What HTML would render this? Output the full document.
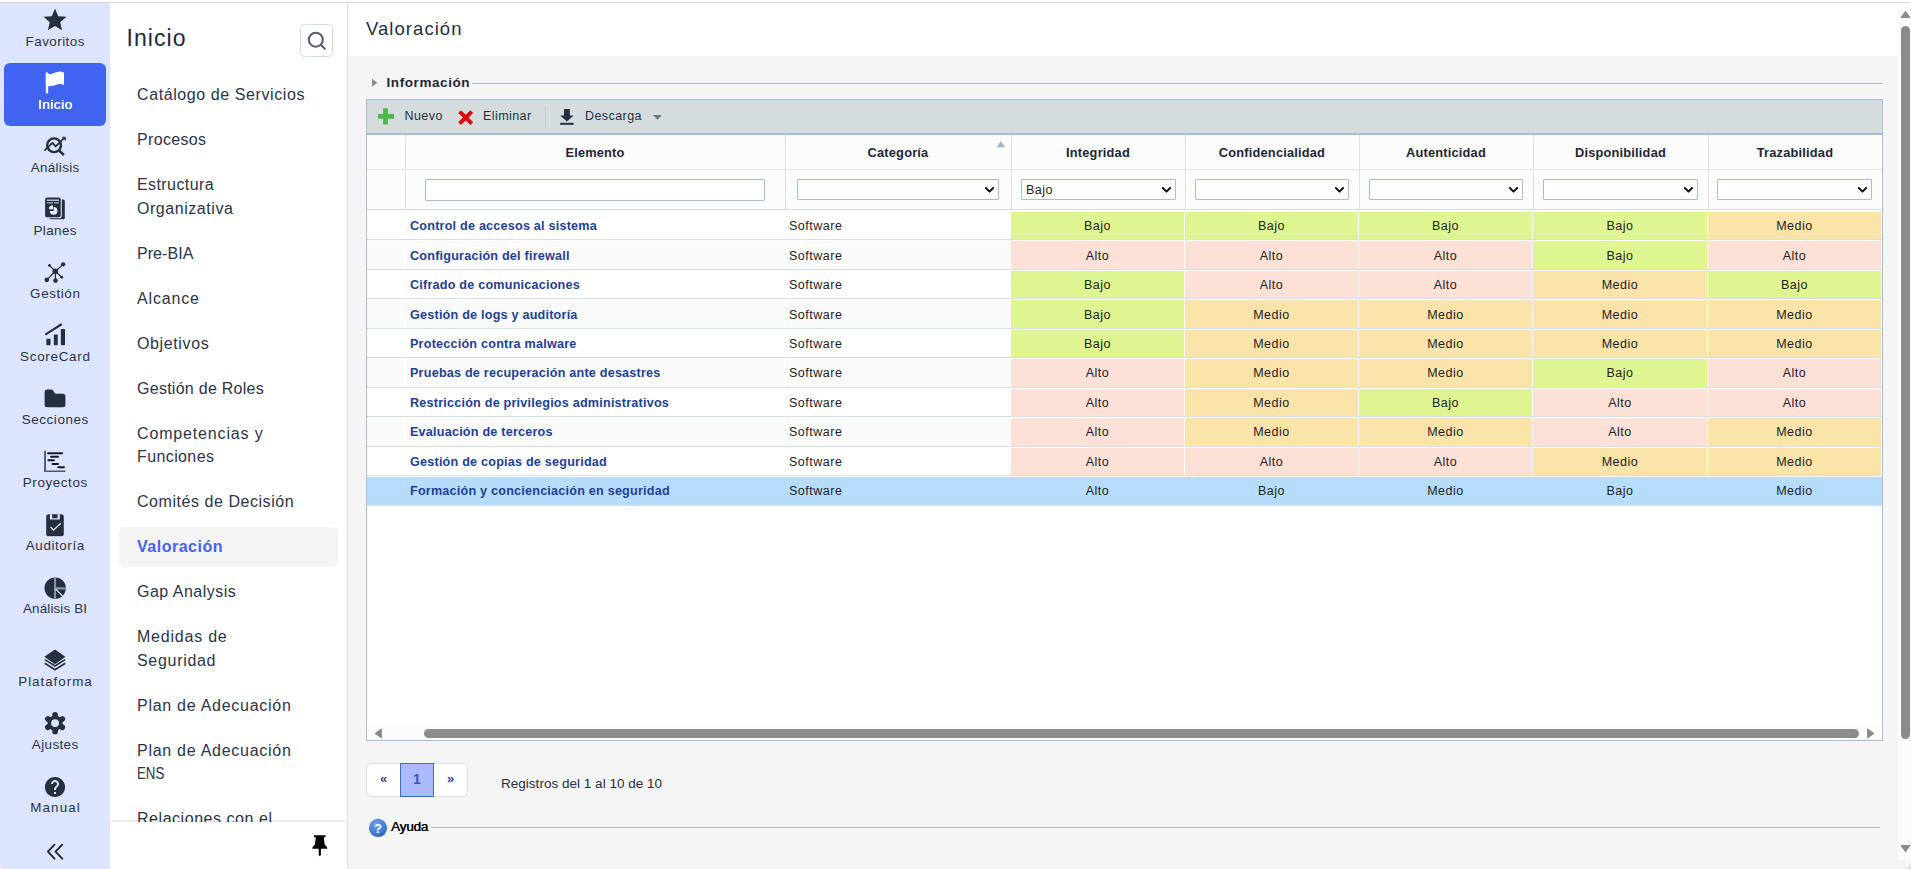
<!DOCTYPE html><html lang="es"><head><meta charset="utf-8"><title>Valoración</title><style>
*{box-sizing:border-box}
html,body{margin:0;padding:0}
body{width:1911px;height:869px;overflow:hidden;position:relative;background:#f5f5f5;font-family:"Liberation Sans", sans-serif;color:#252f3e}
.abs{position:absolute}
#topw{left:0;top:0;width:1911px;height:2px;background:#fff}
#topl{left:0;top:2px;width:1911px;height:1px;background:#d0dade}
#side{left:0;top:3px;width:110px;height:866px;background:#dde4fd}
.si{position:absolute;left:4px;width:102px;height:63px;border-radius:6px;text-align:center}
.si.on{background:#4063f0}
.si .ic{position:absolute;left:51px;top:19.500px;transform:translate(-50%,-50%)}
.si span{position:absolute;left:-10px;width:122px;top:33.800px;font-size:13.400px;line-height:16px;letter-spacing:.3px;color:#2a3346;text-align:center;white-space:nowrap}
.si.on span{color:#fff;font-weight:normal;letter-spacing:.3px;font-size:13.600px;top:34.300px;text-shadow:.15px 0 0 #fff}
#menu{left:110px;top:3px;width:238px;height:866px;background:#fff;border-right:1px solid #dbe2e6;overflow:hidden}
#menu h1{position:absolute;left:16.500px;top:19.700px;margin:0;font-size:23px;line-height:30px;font-weight:normal;color:#1d2740;letter-spacing:1.05px}
#srch{position:absolute;left:190px;top:21px;width:33px;height:33px;border:1px solid #d3dddf;border-radius:4.500px;background:#fff}
#mlist{position:absolute;left:0;top:72.000px;width:237px;height:746.500px;overflow:hidden}
.mi{position:relative;margin:0 9px 5px 9px;padding:8.300px 18px;border-radius:5px;font-size:16.000px;line-height:23.400px;color:#2b3448;letter-spacing:.57px;white-space:nowrap}
.mi.on{background:#f4f4f5;color:#4762f0;font-weight:bold;letter-spacing:.5px;font-size:16.000px}
#mfoot{position:absolute;left:0;top:818.500px;width:237px;height:48px;background:#fff;box-shadow:0 -1px 3px rgba(0,0,0,.13)}
#mainhead{left:348px;top:3px;width:1550px;height:53px;background:#fff}
#mainhead div{position:absolute;left:18px;top:14.000px;font-size:18.500px;line-height:24px;color:#252f3e;letter-spacing:1.05px}
#vtrack{left:1898px;top:3px;width:13px;height:857px;background:#fbfbfb}
.thumb{background:#8b8b8b;border-radius:5px}
/* legend */
#info{left:386.500px;top:73.800px;font-size:13.500px;line-height:18px;font-weight:bold;color:#1e2535;letter-spacing:.58px}
.hl{height:1px;background:#a9c0d8}
/* toolbar */
#tb{left:366px;top:99px;width:1517px;height:36px;background:#d4dcde;border:1px solid #a5bdd6;border-bottom:2px solid #a3bbd5}
.tbt{position:absolute;top:7.000px;font-size:12.500px;line-height:18px;color:#252f3e;letter-spacing:.43px;white-space:nowrap}
/* grid */
#grid{left:366px;top:135px;width:1517px;height:606px;background:#fff;border:1px solid #a5bdd6;border-top:none}
.hc{position:absolute;top:135px;height:34px;background:#fcfcfc;font-size:12.800px;font-weight:bold;line-height:36px;text-align:center;color:#1e2535;letter-spacing:.2px}
.fc{position:absolute;top:169px;height:41px;background:#fcfcfc;border-top:1px solid #dfe5e7;border-bottom:1px solid #d3dde1}
.vb{position:absolute;top:135px;width:1px;height:74px;background:#dce3e6}
.sel,.inp{position:absolute;top:179px;height:21px;background:#fff;border:1px solid #a4bed9;border-radius:1px;font-size:12.500px;line-height:20.500px;padding-left:4px;letter-spacing:.5px;color:#222}
.inp{height:22px}
.sel svg{position:absolute;right:3.500px;top:5.800px}
.row{position:absolute;left:367px;width:1515px;overflow:hidden}
.row.odd{background:#fafafa}
.row.selr{background:#b6defc}
.c{position:absolute;top:0;bottom:0;font-size:12.500px;letter-spacing:.52px;color:#222;white-space:nowrap;border-right:1px solid #fff;overflow:hidden}
.row{border-top:1px solid #fff}.row.first{border-top-width:2px}
.row.selr .c{border-color:#b6defc}

.rb{position:absolute;left:367px;width:1515px;height:1px;background:#d6e0e4}
.c.el{padding-left:5px;font-weight:bold;color:#1e4098;letter-spacing:.22px;font-size:12.600px}
.c.cat{padding-left:4px}
.c.v{text-align:center}
.Bajo{background:#dff592}.Alto{background:#fde0d6}.Medio{background:#fbe4a9}
.row.selr .v{background:none}
/* pager */
#pg{left:366px;top:763px;width:102px;height:34px;background:#fff;border:1px solid #e1e1e1;border-radius:5px}
#pg1{left:400px;top:763px;width:34px;height:34px;background:#aabafb;border:1px solid #3a6fc4}
.pgt{font-size:13px;font-weight:bold;color:#2846a0;line-height:34px;text-align:center;width:34px;top:762px}
#reg{left:501px;top:775.200px;font-size:13.500px;line-height:18px;color:#252f3e;letter-spacing:.02px;white-space:nowrap}
#ay{left:391.000px;top:817.600px;font-size:13.500px;line-height:18px;color:#000;font-weight:normal;letter-spacing:-.18px;text-shadow:.3px 0 0 #000}
</style></head><body>
<div id="topw" class="abs"></div><div id="topl" class="abs"></div>
<div id="side" class="abs">
<div class="si" style="top:-3px"><svg class="ic" style="top:19.5px" viewBox="0 0 24 24" width="27.5" height="27.5"><path fill="#252f3e" d="M12 17.27L18.18 21l-1.64-7.03L22 9.24l-7.19-.61L12 2 9.19 8.63 2 9.24l5.46 4.73L5.82 21z"/></svg><span style="letter-spacing:0.47px;text-indent:0.47px">Favoritos</span></div>
<div class="si on" style="top:60px"><svg class="ic" style="top:19.5px" viewBox="0 0 26.5 26.5" width="26.5" height="26.5"><rect x="4.100" y="2.820" width="2.320" height="20.920" rx=".9" fill="#fff"/><path fill="#fff" d="M4.100 3.600C4.100 2.900 4.700 2.600 5.300 3.000C6.300 3.700 7.100 4.500 8.150 4.450C11.000 4.200 15.000 1.600 18.510 1.790C20.000 1.850 21.300 2.400 22.240 3.030V15.450C21.000 14.700 20.000 14.200 18.510 14.210C15.000 14.300 12.500 16.200 9.810 16.280C8.500 16.400 7.300 16.500 6.420 16.490H4.100z"/></svg><span style="letter-spacing:0.48px;text-indent:0.48px">Inicio</span></div>
<div class="si" style="top:123px"><svg class="ic" style="top:19.5px" viewBox="0 0 26.5 26.5" width="26.5" height="26.5" fill="none" stroke="#252f3e" stroke-linecap="round" stroke-linejoin="round"><circle cx="12.300" cy="12.520" r="6.900" stroke-width="2.400"/><path d="M17.500 18.000L22.200 22.200" stroke-width="2.500" stroke-linecap="butt"/><path d="M3.300 17.300L10.650 10.100L13.950 13.700L22.000 5.700" stroke-width="1.800"/><path d="M23.500 4.500H20.700L23.500 7.300z" fill="#252f3e" stroke-width=".8"/></svg><span style="letter-spacing:0.31px;text-indent:0.31px">Análisis</span></div>
<div class="si" style="top:186px"><svg class="ic" style="top:19.1px" viewBox="0 0 26.5 26.5" width="26.5" height="26.5"><rect x="7.550" y="4.650" width="15.500" height="19.900" rx="1.500" fill="#252f3e"/><rect x="3.350" y="2.850" width="15.600" height="19.600" rx="1.800" fill="#252f3e" stroke="#dde4fd" stroke-width="2.200" paint-order="stroke"/><rect x="5.050" y="4.850" width="12.200" height="1.150" fill="#e6ebfd"/><rect x="5.050" y="7.500" width="6.200" height="1.150" fill="#e6ebfd" opacity=".75"/><rect x="12.300" y="7.500" width="4.950" height="1.150" fill="#e6ebfd" opacity=".75"/><path d="M11.880 16.150V12.350A3.800 3.800 0 1 1 8.080 16.150z" fill="#e6ebfd"/><path d="M11.250 14.550H7.150A4.100 4.100 0 0 1 11.250 10.450z" fill="#e6ebfd"/></svg><span style="letter-spacing:0.38px;text-indent:0.38px">Planes</span></div>
<div class="si" style="top:249px"><svg class="ic" style="top:19.5px" viewBox="0 0 26.5 26.5" width="26.500" height="26.500" stroke="#252f3e" stroke-width="1.200" fill="#252f3e"><path d="M13.540 12.520L21.410 5.610M13.540 12.520L7.740 6.720M13.540 12.520L5.050 21.090M13.540 12.520L13.750 21.840M13.540 12.520L19.960 18.520" fill="none"/><circle cx="13.540" cy="12.520" r="2.800" stroke="none"/><circle cx="21.410" cy="5.610" r="2.150" stroke="none"/><circle cx="7.740" cy="6.720" r="1.350" stroke="none"/><circle cx="5.050" cy="21.090" r="2.300" stroke="none"/><circle cx="13.750" cy="21.840" r="2.300" stroke="none"/><circle cx="19.960" cy="18.520" r="1.450" stroke="none"/></svg><span style="letter-spacing:0.60px;text-indent:0.60px">Gestión</span></div>
<div class="si" style="top:312px"><svg class="ic" style="top:19.1px" viewBox="0 0 26.5 26.5" width="26.500" height="26.500"><rect x="4.640" y="18.110" width="4.140" height="6.420" rx=".7" fill="#252f3e"/><rect x="12.090" y="13.760" width="3.930" height="10.770" rx=".7" fill="#252f3e"/><rect x="19.130" y="8.170" width="4.140" height="16.360" rx=".7" fill="#252f3e"/><path d="M4.300 13.450L19.400 3.750" stroke="#252f3e" stroke-width="2.100" stroke-linecap="round" fill="none"/></svg><span style="letter-spacing:0.74px;text-indent:0.74px">ScoreCard</span></div>
<div class="si" style="top:375px"><svg class="ic" style="top:19.2px" viewBox="0 0 26.5 26.5" width="26.5" height="26.5"><path fill="#252f3e" d="M5.350 5.690H9.600Q10.500 5.690 11.100 6.500L13.000 9.300Q13.500 10.040 14.400 10.040H21.180A2.500 2.500 0 0 1 23.680 12.540V20.990A2.500 2.500 0 0 1 21.180 23.490H5.350A2.500 2.500 0 0 1 2.850 20.990V8.190A2.500 2.500 0 0 1 5.350 5.690z"/></svg><span style="letter-spacing:0.61px;text-indent:0.61px">Secciones</span></div>
<div class="si" style="top:438px"><svg class="ic" style="top:19.1px" viewBox="0 0 26.5 26.5" width="26.500" height="26.500" fill="none" stroke-linecap="round"><path d="M2.350 4.050h1.850v19.600h19.450v1.700H2.350z" fill="#4f566b"/><path d="M6.250 6.580H20.400M9.350 10.050H16.250M6.650 13.550H12.150M10.800 17.150H16.250M16.400 20.600H22.250" stroke="#111b2b" stroke-width="2.000"/></svg><span style="letter-spacing:0.61px;text-indent:0.61px">Proyectos</span></div>
<div class="si" style="top:501px"><svg class="ic" style="top:19.5px" viewBox="0 0 26.5 26.5" width="26.500" height="26.500"><rect x="4.430" y="3.620" width="17.600" height="21.930" rx="2.600" fill="#252f3e"/><path d="M8.150 3.400h9.940v5.450h-9.940z" fill="#dde4fd"/><path d="M10.430 3.400h5.390v4.150h-5.390z" fill="#252f3e"/><path d="M8.780 16.100L11.680 19.350L19.130 12.530" stroke="#e4e9fd" stroke-width="1.250" fill="none"/></svg><span style="letter-spacing:0.59px;text-indent:0.59px">Auditoría</span></div>
<div class="si" style="top:564px"><svg class="ic" style="top:19.5px" viewBox="0 0 26.5 26.5" width="26.500" height="26.500"><defs><clipPath id="pc"><circle cx="13.440" cy="14.350" r="10.700"/></clipPath></defs><circle cx="13.440" cy="14.350" r="10.700" fill="#252f3e"/><g clip-path="url(#pc)"><path d="M13.290 3V27M14.300 14.650H25" stroke="#8a92ae" stroke-width="2.100" fill="none"/><path d="M13.700 15.100L21.200 22.600" stroke="#f0f3ff" stroke-width="1.150" fill="none"/></g></svg><span style="letter-spacing:0.15px;text-indent:0.15px">Análisis BI</span></div>
<div class="si" style="top:637px"><svg class="ic" style="top:19.5px" viewBox="0 0 26.5 26.5" width="26.500" height="26.500"><path d="M13.250 2.800L23.680 10.040L13.250 17.500L2.550 10.040z" fill="#252f3e"/><path d="M3.200 12.900L13.250 19.250L23.300 12.900M3.000 16.550L13.250 22.950L23.500 16.550" stroke="#252f3e" stroke-width="1.700" fill="none"/></svg><span style="letter-spacing:0.97px;text-indent:0.97px">Plataforma</span></div>
<div class="si" style="top:700px"><svg class="ic" style="top:19.5px" viewBox="0 0 26.5 26.5" width="26.500" height="26.500"><path d="M13.33 13.35L13.33 5.05M13.33 13.35L6.14 9.20M13.33 13.35L6.14 17.50M13.33 13.35L13.33 21.65M13.33 13.35L20.52 17.50M13.33 13.35L20.52 9.20" stroke="#252f3e" stroke-width="5.700" stroke-linecap="round" fill="none"/><circle cx="13.33" cy="13.35" r="7.600" fill="#252f3e"/><circle cx="13.33" cy="13.35" r="3.950" fill="#dde4fd"/></svg><span style="letter-spacing:0.40px;text-indent:0.40px">Ajustes</span></div>
<div class="si" style="top:763px"><svg class="ic" style="top:21.1px" viewBox="0 0 24 24" width="24.2" height="24.2"><path fill="#252f3e" d="M12 2C6.48 2 2 6.48 2 12s4.48 10 10 10 10-4.48 10-10S17.52 2 12 2zm1 17h-2v-2h2v2zm2.070-7.750l-.9.920C13.450 12.900 13 13.500 13 15h-2v-.5c0-1.100.450-2.100 1.170-2.830l1.240-1.260c.370-.360.590-.860.590-1.410 0-1.100-.900-2-2-2s-2 .900-2 2H8c0-2.210 1.790-4 4-4s4 1.790 4 4c0 .880-.360 1.680-.930 2.250z"/></svg><span style="letter-spacing:1.10px;text-indent:1.10px">Manual</span></div>
<svg class="abs" style="left:45px;top:839px" width="22" height="20" viewBox="0 0 22 20" fill="none" stroke="#1f2836" stroke-width="1.900" stroke-linecap="round" stroke-linejoin="round"><path d="M9.500 2.700L2.900 9.700L9.500 16.700M17.200 2.700L10.600 9.700L17.200 16.700"/></svg>
</div>
<div id="menu" class="abs"><h1>Inicio</h1><div id="srch"><svg width="31" height="31" viewBox="0 0 31 31" fill="none" stroke="#5c5a72" stroke-width="2.050" stroke-linecap="round"><circle cx="14.800" cy="14.680" r="7.000"/><path d="M19.800 19.700L23.900 23.700"/></svg></div><div id="mlist">
<div class="mi"><span style="letter-spacing:0.59px">Catálogo de Servicios</span></div>
<div class="mi"><span style="letter-spacing:0.34px">Procesos</span></div>
<div class="mi"><span style="letter-spacing:0.41px">Estructura</span><br><span style="letter-spacing:0.55px">Organizativa</span></div>
<div class="mi"><span style="letter-spacing:0.05px">Pre-BIA</span></div>
<div class="mi"><span style="letter-spacing:0.84px">Alcance</span></div>
<div class="mi"><span style="letter-spacing:0.62px">Objetivos</span></div>
<div class="mi"><span style="letter-spacing:0.27px">Gestión de Roles</span></div>
<div class="mi"><span style="letter-spacing:0.84px">Competencias y</span><br><span style="letter-spacing:0.39px">Funciones</span></div>
<div class="mi"><span style="letter-spacing:0.55px">Comités de Decisión</span></div>
<div class="mi on"><span style="letter-spacing:0.50px">Valoración</span></div>
<div class="mi"><span style="letter-spacing:0.48px">Gap Analysis</span></div>
<div class="mi"><span style="letter-spacing:0.78px">Medidas de</span><br><span style="letter-spacing:0.69px">Seguridad</span></div>
<div class="mi"><span style="letter-spacing:0.73px">Plan de Adecuación</span></div>
<div class="mi"><span style="letter-spacing:0.73px">Plan de Adecuación</span><br><span style="letter-spacing:0.00px;display:inline-block;transform:scaleX(.83);transform-origin:0 50%">ENS</span></div>
<div class="mi"><span style="letter-spacing:0.54px">Relaciones con el</span></div>
</div><div id="mfoot"><svg class="abs" style="left:200px;top:11px" width="20" height="26" viewBox="0 0 20 26"><path fill="#000" d="M4.000 2.300h11.500v2.000h-1.700l.9 7.500c1.500.9 2.500 2.200 2.700 4.000H10.900v6.100l-1.100 1.300-1.100-1.300v-6.100H2.200c.2-1.800 1.200-3.100 2.700-4.000l.900-7.500H4.000z"/></svg></div></div>
<div id="mainhead" class="abs"><div>Valoración</div></div>
<div id="vtrack" class="abs"></div>
<svg class="abs" style="left:1900px;top:10px" width="11" height="9" viewBox="0 0 11 9"><path d="M5.500 1.500L9.700 7.300H1.300z" fill="#8b8b8b" stroke="#8b8b8b" stroke-width="1.200" stroke-linejoin="round"/></svg>
<div class="abs thumb" style="left:1901px;top:26px;width:9px;height:713.000px"></div>
<svg class="abs" style="left:1900px;top:844px" width="11" height="9" viewBox="0 0 11 9"><path d="M5.500 7.500L9.700 1.700H1.300z" fill="#8b8b8b" stroke="#8b8b8b" stroke-width="1.200" stroke-linejoin="round"/></svg>
<svg class="abs" style="left:371px;top:78px" width="8" height="10" viewBox="0 0 8 10"><path d="M1.000 .800L6.300 4.700L1.000 8.700z" fill="#8c8c8c"/></svg>
<div id="info" class="abs">Información</div>
<div class="abs hl" style="left:472px;top:83px;width:1411px"></div>
<div id="tb" class="abs">
<svg class="abs" style="left:11px;top:8px" width="17" height="17" viewBox="0 0 17 17"><path d="M5.100 .200h4.800v5.700h6.200v4.800h-6.200v5.700H5.100v-5.700H.100V5.900h5.000z" fill="#4db848"/></svg>
<div class="tbt" style="left:37.500px">Nuevo</div>
<svg class="abs" style="left:91px;top:10px" width="16" height="16" viewBox="0 0 16 16"><path d="M3.000 .300L7.700 4.700L12.400 .300L15.200 3.000L10.500 7.600L15.200 12.200L12.400 14.900L7.700 10.500L3.000 14.900L.200 12.200L4.900 7.600L.200 3.000z" fill="#dc0a0a"/></svg>
<div class="tbt" style="left:116px">Eliminar</div>
<div class="abs" style="left:178px;top:6px;width:1px;height:22px;background:#bccfe2"></div>
<svg class="abs" style="left:193px;top:9px" width="15" height="17" viewBox="0 0 15 17"><path d="M4.000 .100h5.900v6.500h3.700L6.900 12.600L.200 6.600h3.800z" fill="#252f3e"/><rect x=".200" y="13.800" width="13.400" height="2.000" fill="#252f3e"/></svg>
<div class="tbt" style="left:218px">Descarga</div>
<svg class="abs" style="left:284.500px;top:14.300px" width="11" height="7" viewBox="0 0 11 7"><path d="M1.200 1.000h8.600L5.500 5.800z" fill="#6d7580"/></svg>
</div>
<div id="grid" class="abs"></div><div class="abs" style="left:367px;top:726px;width:1515px;height:14px;background:#fcfcfc"></div>
<div class="hc" style="left:367px;width:38px"></div>
<div class="fc" style="left:367px;width:38px"></div>
<div class="hc" style="left:405px;width:380px">Elemento</div>
<div class="fc" style="left:405px;width:380px"></div>
<div class="vb" style="left:405px"></div>
<div class="hc" style="left:785px;width:226px">Categoría</div>
<div class="fc" style="left:785px;width:226px"></div>
<div class="vb" style="left:785px"></div>
<div class="hc" style="left:1011px;width:174px">Integridad</div>
<div class="fc" style="left:1011px;width:174px"></div>
<div class="vb" style="left:1011px"></div>
<div class="hc" style="left:1185px;width:174px">Confidencialidad</div>
<div class="fc" style="left:1185px;width:174px"></div>
<div class="vb" style="left:1185px"></div>
<div class="hc" style="left:1359px;width:174px">Autenticidad</div>
<div class="fc" style="left:1359px;width:174px"></div>
<div class="vb" style="left:1359px"></div>
<div class="hc" style="left:1533px;width:175px">Disponibilidad</div>
<div class="fc" style="left:1533px;width:175px"></div>
<div class="vb" style="left:1533px"></div>
<div class="hc" style="left:1708px;width:174px">Trazabilidad</div>
<div class="fc" style="left:1708px;width:174px"></div>
<div class="vb" style="left:1708px"></div>
<svg class="abs" style="left:996px;top:140px" width="10" height="8" viewBox="0 0 10 8"><path d="M4.800 1.000L9.200 7.200H.600z" fill="#aab1c6"/></svg>
<div class="inp" style="left:425px;width:340px"></div>
<div class="sel" style="left:797px;width:202px"><svg width="11" height="8" viewBox="0 0 11 8" fill="none" stroke="#111" stroke-width="2.000" stroke-linecap="round" stroke-linejoin="round"><path d="M1.900 2.000L5.500 5.600L9.100 2.000"/></svg></div>
<div class="sel" style="left:1021px;width:155px">Bajo<svg width="11" height="8" viewBox="0 0 11 8" fill="none" stroke="#111" stroke-width="2.000" stroke-linecap="round" stroke-linejoin="round"><path d="M1.900 2.000L5.500 5.600L9.100 2.000"/></svg></div>
<div class="sel" style="left:1195px;width:154px"><svg width="11" height="8" viewBox="0 0 11 8" fill="none" stroke="#111" stroke-width="2.000" stroke-linecap="round" stroke-linejoin="round"><path d="M1.900 2.000L5.500 5.600L9.100 2.000"/></svg></div>
<div class="sel" style="left:1369px;width:154px"><svg width="11" height="8" viewBox="0 0 11 8" fill="none" stroke="#111" stroke-width="2.000" stroke-linecap="round" stroke-linejoin="round"><path d="M1.900 2.000L5.500 5.600L9.100 2.000"/></svg></div>
<div class="sel" style="left:1543px;width:155px"><svg width="11" height="8" viewBox="0 0 11 8" fill="none" stroke="#111" stroke-width="2.000" stroke-linecap="round" stroke-linejoin="round"><path d="M1.900 2.000L5.500 5.600L9.100 2.000"/></svg></div>
<div class="sel" style="left:1717px;width:155px"><svg width="11" height="8" viewBox="0 0 11 8" fill="none" stroke="#111" stroke-width="2.000" stroke-linecap="round" stroke-linejoin="round"><path d="M1.900 2.000L5.500 5.600L9.100 2.000"/></svg></div>
<div class="row first" style="top:210px;height:29px;line-height:28.04px"><div class="c" style="left:0;width:38px"></div><div class="c el" style="left:38px;width:380px">Control de accesos al sistema</div><div class="c cat" style="left:418px;width:226px">Software</div><div class="c v Bajo" style="left:644px;width:174px">Bajo</div><div class="c v Bajo" style="left:818px;width:174px">Bajo</div><div class="c v Bajo" style="left:992px;width:174px">Bajo</div><div class="c v Bajo" style="left:1166px;width:175px">Bajo</div><div class="c v Medio" style="left:1341px;width:174px">Medio</div></div>
<div class="rb" style="top:239px"></div>
<div class="row odd" style="top:240px;height:29px;line-height:30.04px"><div class="c" style="left:0;width:38px"></div><div class="c el" style="left:38px;width:380px">Configuración del firewall</div><div class="c cat" style="left:418px;width:226px">Software</div><div class="c v Alto" style="left:644px;width:174px">Alto</div><div class="c v Alto" style="left:818px;width:174px">Alto</div><div class="c v Alto" style="left:992px;width:174px">Alto</div><div class="c v Bajo" style="left:1166px;width:175px">Bajo</div><div class="c v Alto" style="left:1341px;width:174px">Alto</div></div>
<div class="rb" style="top:269px"></div>
<div class="row" style="top:270px;height:28px;line-height:28.04px"><div class="c" style="left:0;width:38px"></div><div class="c el" style="left:38px;width:380px">Cifrado de comunicaciones</div><div class="c cat" style="left:418px;width:226px">Software</div><div class="c v Bajo" style="left:644px;width:174px">Bajo</div><div class="c v Alto" style="left:818px;width:174px">Alto</div><div class="c v Alto" style="left:992px;width:174px">Alto</div><div class="c v Medio" style="left:1166px;width:175px">Medio</div><div class="c v Bajo" style="left:1341px;width:174px">Bajo</div></div>
<div class="rb" style="top:298px"></div>
<div class="row odd" style="top:299px;height:29px;line-height:30.04px"><div class="c" style="left:0;width:38px"></div><div class="c el" style="left:38px;width:380px">Gestión de logs y auditoría</div><div class="c cat" style="left:418px;width:226px">Software</div><div class="c v Bajo" style="left:644px;width:174px">Bajo</div><div class="c v Medio" style="left:818px;width:174px">Medio</div><div class="c v Medio" style="left:992px;width:174px">Medio</div><div class="c v Medio" style="left:1166px;width:175px">Medio</div><div class="c v Medio" style="left:1341px;width:174px">Medio</div></div>
<div class="rb" style="top:328px"></div>
<div class="row" style="top:329px;height:28px;line-height:28.04px"><div class="c" style="left:0;width:38px"></div><div class="c el" style="left:38px;width:380px">Protección contra malware</div><div class="c cat" style="left:418px;width:226px">Software</div><div class="c v Bajo" style="left:644px;width:174px">Bajo</div><div class="c v Medio" style="left:818px;width:174px">Medio</div><div class="c v Medio" style="left:992px;width:174px">Medio</div><div class="c v Medio" style="left:1166px;width:175px">Medio</div><div class="c v Medio" style="left:1341px;width:174px">Medio</div></div>
<div class="rb" style="top:357px"></div>
<div class="row odd" style="top:358px;height:29px;line-height:28.04px"><div class="c" style="left:0;width:38px"></div><div class="c el" style="left:38px;width:380px">Pruebas de recuperación ante desastres</div><div class="c cat" style="left:418px;width:226px">Software</div><div class="c v Alto" style="left:644px;width:174px">Alto</div><div class="c v Medio" style="left:818px;width:174px">Medio</div><div class="c v Medio" style="left:992px;width:174px">Medio</div><div class="c v Bajo" style="left:1166px;width:175px">Bajo</div><div class="c v Alto" style="left:1341px;width:174px">Alto</div></div>
<div class="rb" style="top:387px"></div>
<div class="row" style="top:388px;height:28px;line-height:28.04px"><div class="c" style="left:0;width:38px"></div><div class="c el" style="left:38px;width:380px">Restricción de privilegios administrativos</div><div class="c cat" style="left:418px;width:226px">Software</div><div class="c v Alto" style="left:644px;width:174px">Alto</div><div class="c v Medio" style="left:818px;width:174px">Medio</div><div class="c v Bajo" style="left:992px;width:174px">Bajo</div><div class="c v Alto" style="left:1166px;width:175px">Alto</div><div class="c v Alto" style="left:1341px;width:174px">Alto</div></div>
<div class="rb" style="top:416px"></div>
<div class="row odd" style="top:417px;height:29px;line-height:28.04px"><div class="c" style="left:0;width:38px"></div><div class="c el" style="left:38px;width:380px">Evaluación de terceros</div><div class="c cat" style="left:418px;width:226px">Software</div><div class="c v Alto" style="left:644px;width:174px">Alto</div><div class="c v Medio" style="left:818px;width:174px">Medio</div><div class="c v Medio" style="left:992px;width:174px">Medio</div><div class="c v Alto" style="left:1166px;width:175px">Alto</div><div class="c v Medio" style="left:1341px;width:174px">Medio</div></div>
<div class="rb" style="top:446px"></div>
<div class="row" style="top:447px;height:28px;line-height:28.04px"><div class="c" style="left:0;width:38px"></div><div class="c el" style="left:38px;width:380px">Gestión de copias de seguridad</div><div class="c cat" style="left:418px;width:226px">Software</div><div class="c v Alto" style="left:644px;width:174px">Alto</div><div class="c v Alto" style="left:818px;width:174px">Alto</div><div class="c v Alto" style="left:992px;width:174px">Alto</div><div class="c v Medio" style="left:1166px;width:175px">Medio</div><div class="c v Medio" style="left:1341px;width:174px">Medio</div></div>
<div class="rb" style="top:475px"></div>
<div class="row odd selr" style="top:476px;height:29px;line-height:28.04px"><div class="c" style="left:0;width:38px"></div><div class="c el" style="left:38px;width:380px">Formación y concienciación en seguridad</div><div class="c cat" style="left:418px;width:226px">Software</div><div class="c v Alto" style="left:644px;width:174px">Alto</div><div class="c v Bajo" style="left:818px;width:174px">Bajo</div><div class="c v Medio" style="left:992px;width:174px">Medio</div><div class="c v Bajo" style="left:1166px;width:175px">Bajo</div><div class="c v Medio" style="left:1341px;width:174px">Medio</div></div>
<div class="rb" style="top:505px"></div>
<svg class="abs" style="left:374.300px;top:728px" width="9" height="11" viewBox="0 0 9 11"><path d="M7.300 1.300L1.500 5.500L7.300 9.700z" fill="#8b8b8b" stroke="#8b8b8b" stroke-width="1.200" stroke-linejoin="round"/></svg>
<div class="abs thumb" style="left:424px;top:729px;width:1435px;height:9px"></div>
<svg class="abs" style="left:1866px;top:728px" width="9" height="11" viewBox="0 0 9 11"><path d="M1.700 1.300L7.500 5.500L1.700 9.700z" fill="#8b8b8b" stroke="#8b8b8b" stroke-width="1.200" stroke-linejoin="round"/></svg>
<div id="pg" class="abs"></div><div id="pg1" class="abs"></div>
<div class="abs pgt" style="left:366.500px">«</div><div class="abs pgt" style="left:400px;color:#3558b8;font-size:14px">1</div><div class="abs pgt" style="left:433.500px">»</div>
<div id="reg" class="abs">Registros del 1 al 10 de 10</div>
<svg class="abs" style="left:368px;top:818px" width="20" height="20" viewBox="0 0 20 20"><defs><radialGradient id="g1" cx=".4" cy=".3" r=".8"><stop offset="0" stop-color="#6ea6e4"/><stop offset=".65" stop-color="#4279cd"/><stop offset="1" stop-color="#2a55b0"/></radialGradient></defs><circle cx="10.000" cy="9.950" r="9.100" fill="url(#g1)"/><text x="10.000" y="14.700" font-family='&quot;Liberation Sans&quot;, sans-serif' font-weight="bold" font-size="13" fill="#fff" text-anchor="middle">?</text></svg>
<div id="ay" class="abs">Ayuda</div>
<div class="abs hl" style="left:431px;top:827px;width:1449px"></div>
<div class="abs" style="left:0;top:862px;width:7px;height:7px;background:radial-gradient(circle at 100% 0,rgba(238,238,238,0) 6.300px,#ececec 7.300px)"></div><div class="abs" style="left:1904px;top:862px;width:7px;height:7px;background:radial-gradient(circle at 0 0,rgba(225,225,225,0) 6.300px,#dedede 7.300px)"></div>
</body></html>
